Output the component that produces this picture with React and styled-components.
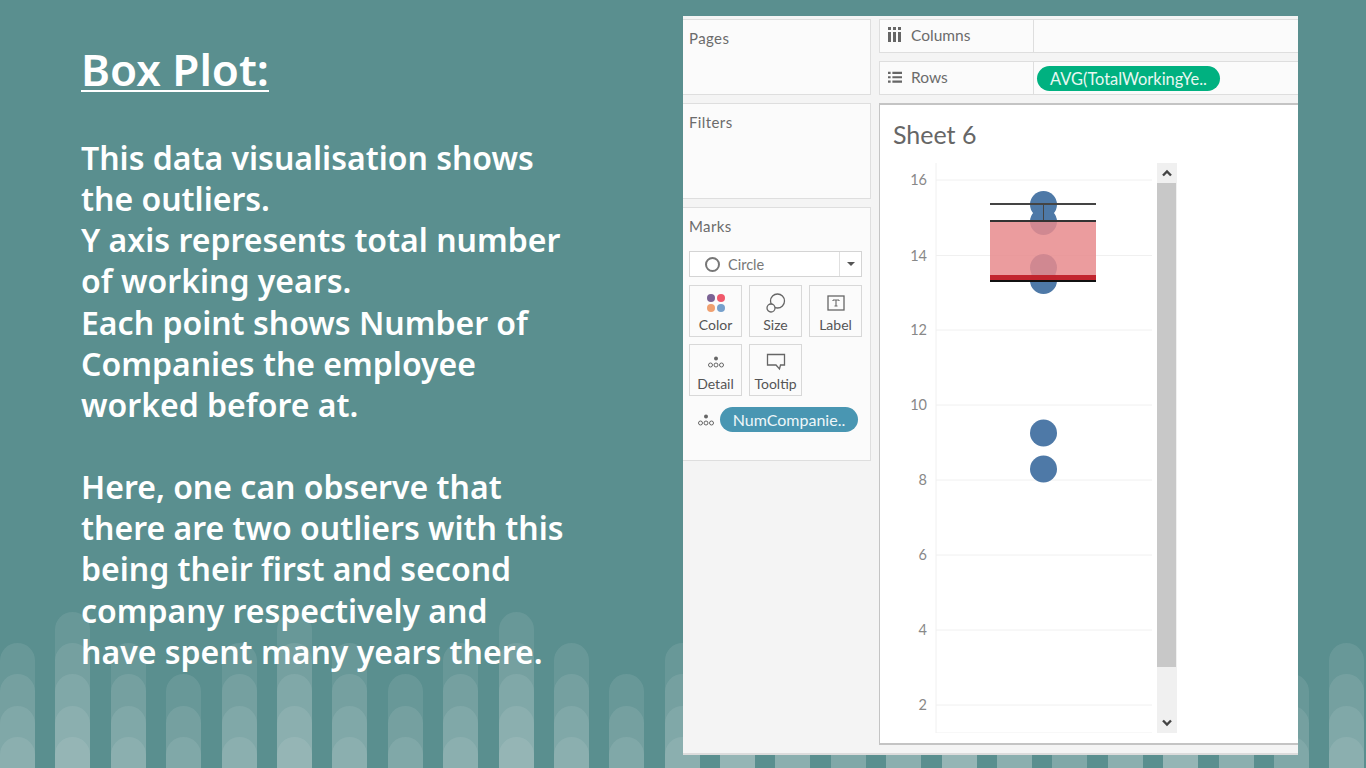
import React from 'react';
import styled, { createGlobalStyle } from 'styled-components';

const BAR_PATTERN = [4, 5, 4, 3];
const BARS = Array.from({ length: 25 }, (_, i) => BAR_PATTERN[i % 4]);
const TICKS = [
  { label: '16', y: 180 },
  { label: '14', y: 255.5 },
  { label: '12', y: 330 },
  { label: '10', y: 405 },
  { label: '8', y: 480 },
  { label: '6', y: 555 },
  { label: '4', y: 630 },
  { label: '2', y: 705 },
];
const POINTS = [204.5, 221.5, 267.5, 280.5, 433, 469];

const DetailIcon = () => (
  <svg width="18" height="14" viewBox="0 0 18 14" fill="none" stroke="#666" strokeWidth="1">
    <circle cx="9" cy="3.5" r="2" fill="#666" stroke="none" />
    <circle cx="3.5" cy="10" r="2" />
    <circle cx="9" cy="10" r="2" />
    <circle cx="14.5" cy="10" r="2" />
  </svg>
);

const ColorIcon = () => (
  <svg width="20" height="20" viewBox="0 0 20 20">
    <circle cx="5" cy="5" r="4" fill="#7b6294" />
    <circle cx="15" cy="5" r="4" fill="#f0596b" />
    <circle cx="5" cy="15" r="4" fill="#f0a070" />
    <circle cx="15" cy="15" r="4" fill="#76a0cc" />
  </svg>
);

const SizeIcon = () => (
  <svg width="20" height="20" viewBox="0 0 20 20" fill="none" stroke="#666" strokeWidth="1.3">
    <circle cx="11.5" cy="8" r="7" />
    <circle cx="5" cy="15" r="4" fill="#fbfbfb" />
  </svg>
);

const LabelIcon = () => (
  <svg width="18" height="16" viewBox="0 0 18 16" fill="none" stroke="#666">
    <rect x="1" y="1" width="16" height="14" strokeWidth="1.3" />
    <path d="M6 5h6M9 5v6M7.5 11h3M6 5v1M12 5v1" strokeWidth="1.1" />
  </svg>
);

const TooltipIcon = () => (
  <svg width="20" height="18" viewBox="0 0 20 18" fill="none" stroke="#666" strokeWidth="1.3">
    <path d="M1.5 1.5h17v10.500h-4l-1 4-3.500-4h-8.500z" />
  </svg>
);

const WaveStack = ({ count }) =>
  count > 0 ? (
    <WaveLayer>
      <WaveStack count={count - 1} />
    </WaveLayer>
  ) : null;

const MarkCard = ({ icon, label }) => (
  <Card>
    <CardIcon>{icon}</CardIcon>
    {label}
  </Card>
);

const Plot = () => (
  <PlotSvg width="277" height="570" viewBox="880 163 277 570">
    <line x1="936" y1="163" x2="936" y2="733" stroke="#f0f0f0" />
    {TICKS.map((tick) => (
      <g key={tick.label}>
        <line x1="936" y1={tick.y} x2="1152" y2={tick.y} stroke="#f0f0f0" />
        <TickLabel x="927" y={tick.y + 5}>
          {tick.label}
        </TickLabel>
      </g>
    ))}
    <line x1="936" y1="733" x2="1152" y2="733" stroke="#f0f0f0" />
    {POINTS.map((cy) => (
      <circle key={cy} cx="1043.500" cy={cy} r="13.500" fill="#4e79a7" />
    ))}
    <rect x="990" y="221" width="106" height="60" fill="#e88b8d" fillOpacity="0.85" />
    <rect x="990" y="275" width="106" height="5" fill="#c01f28" fillOpacity="0.95" />
    <line x1="990" y1="204" x2="1096" y2="204" stroke="#444" strokeWidth="2" />
    <line x1="1043.500" y1="204" x2="1043.500" y2="221" stroke="#444" />
    <line x1="990" y1="221" x2="1096" y2="221" stroke="#333" strokeWidth="2" />
    <line x1="990" y1="281" x2="1096" y2="281" stroke="#111" strokeWidth="2" />
  </PlotSvg>
);

const App = () => {
  return (
    <Slide>
      <GlobalStyle />
      <Waves>
        {BARS.map((count, i) => (
          <WaveBar key={i}>
            <WaveStack count={count} />
          </WaveBar>
        ))}
      </Waves>

      <TextColumn>
        <Title>Box Plot:</Title>
        <Paragraph>
          This data visualisation shows
          <br />
          the outliers.
          <br />
          Y axis represents total number
          <br />
          of working years.
          <br />
          Each point shows Number of
          <br />
          Companies the employee
          <br />
          worked before at.
        </Paragraph>
        <Paragraph>
          Here, one can observe that
          <br />
          there are two outliers with this
          <br />
          being their first and second
          <br />
          company respectively and
          <br />
          have spent many years there.
        </Paragraph>
      </TextColumn>

      <Workbook>
        <SideColumn>
          <Pane $height={76}>
            <PaneTitle>Pages</PaneTitle>
          </Pane>
          <Pane $height={96}>
            <PaneTitle>Filters</PaneTitle>
          </Pane>
          <Pane $height={254}>
            <PaneTitle>Marks</PaneTitle>
            <MarkSelect>
              <MarkType>
                <MarkCircle />
                Circle
              </MarkType>
              <MarkCaret />
            </MarkSelect>
            <CardGrid>
              <MarkCard icon={<ColorIcon />} label="Color" />
              <MarkCard icon={<SizeIcon />} label="Size" />
              <MarkCard icon={<LabelIcon />} label="Label" />
              <MarkCard icon={<DetailIcon />} label="Detail" />
              <MarkCard icon={<TooltipIcon />} label="Tooltip" />
            </CardGrid>
            <FieldRow>
              <DetailIcon />
              <MarkPill>NumCompanie..</MarkPill>
            </FieldRow>
          </Pane>
        </SideColumn>

        <MainColumn>
          <Shelf>
            <ShelfLabel>
              <svg width="14" height="16" viewBox="0 0 14 16" fill="#666">
                <path d="M0 0h3v3H0zM5 0h3v3H5zM10 0h3v3h-3zM0 5h3v10H0zM5 5h3v10H5zM10 5h3v10h-3z" />
              </svg>
              Columns
            </ShelfLabel>
            <ShelfBody />
          </Shelf>
          <Shelf>
            <ShelfLabel>
              <svg width="14" height="14" viewBox="0 0 16 14" fill="#666">
                <path d="M0 1h3v2.500H0zM5 1h11v2.500H5zM0 6h3v2.500H0zM5 6h11v2.500H5zM0 11h3v2.500H0zM5 11h11v2.500H5z" />
              </svg>
              Rows
            </ShelfLabel>
            <ShelfBody>
              <RowPill>AVG(TotalWorkingYe..</RowPill>
            </ShelfBody>
          </Shelf>
          <Sheet>
            <SheetTitle>Sheet 6</SheetTitle>
            <ChartRow>
              <Plot />
              <Scrollbar>
                <ScrollArrow>
                  <svg width="12" height="8" viewBox="0 0 12 8" fill="none" stroke="#444" strokeWidth="2.400">
                    <path d="M2 6.500l4-4 4 4" />
                  </svg>
                </ScrollArrow>
                <ScrollThumb />
                <ScrollArrow $bottom>
                  <svg width="12" height="8" viewBox="0 0 12 8" fill="none" stroke="#444" strokeWidth="2.400">
                    <path d="M2 1.500l4 4 4-4" />
                  </svg>
                </ScrollArrow>
              </Scrollbar>
            </ChartRow>
          </Sheet>
        </MainColumn>
      </Workbook>
    </Slide>
  );
};

export default App;

const GlobalStyle = createGlobalStyle`
  html, body {
    margin: 0;
    padding: 0;
  }
  body {
    width: 1366px;
    height: 768px;
    overflow: hidden;
    background: #5a8f8f;
  }
`;

const Slide = styled.div`
  position: relative;
  width: 1366px;
  height: 768px;
  display: flex;
  justify-content: space-between;
  padding: 16px 68px 13px 81px;
  box-sizing: border-box;
  overflow: hidden;
  background: #5a8f8f;
`;

const Waves = styled.div`
  position: absolute;
  left: 0;
  right: -20px;
  bottom: 0;
  display: flex;
  align-items: flex-end;
  gap: 20.4px;
`;

const WaveBar = styled.div`
  width: 35px;
  flex-shrink: 0;
`;

const WaveLayer = styled.div`
  padding-top: 31.2px;
  border-radius: 17.5px 17.5px 0 0;
  background: rgba(255, 255, 255, 0.085);
`;

const TextColumn = styled.div`
  position: relative;
  width: 540px;
  padding-top: 27px;
  font-family: 'Noto Sans', 'Open Sans', sans-serif;
  color: #fff;
`;

const Title = styled.h1`
  margin: 0 0 32px;
  height: 62px;
  font-size: 44px;
  line-height: 52px;
  font-weight: 600;
  text-decoration: underline;
  text-decoration-thickness: 2px;
  text-underline-offset: 4px;
`;

const Paragraph = styled.p`
  margin: 0 0 41px;
  font-size: 32px;
  line-height: 41.15px;
  font-weight: 600;
  white-space: nowrap;
`;

const Workbook = styled.div`
  position: relative;
  width: 615px;
  height: 739px;
  display: flex;
  gap: 8px;
  padding: 3px 0 0;
  box-sizing: border-box;
  background: #f4f4f4;
  border-bottom: 2px solid #dcdcdc;
  font-family: 'Lato', 'Liberation Sans', sans-serif;
  color: #666;
`;

const SideColumn = styled.div`
  width: 188px;
  flex-shrink: 0;
  display: flex;
  flex-direction: column;
  gap: 8px;
`;

const Pane = styled.div`
  height: ${({ $height }) => $height}px;
  box-sizing: border-box;
  padding: 9px 8px 0 6px;
  background: #fbfbfb;
  border: 1px solid #dedede;
  border-left: none;
`;

const PaneTitle = styled.div`
  font-size: 15px;
  line-height: 18px;
  letter-spacing: 0.4px;
  color: #6b6b6b;
`;

const MarkSelect = styled.div`
  margin-top: 16px;
  height: 26px;
  display: flex;
  box-sizing: border-box;
  background: #fff;
  border: 1px solid #d4d4d4;
`;

const MarkType = styled.div`
  flex: 1;
  display: flex;
  align-items: center;
  gap: 8px;
  padding-left: 15px;
  font-size: 14.5px;
  color: #777;
  border-right: 1px solid #e0e0e0;
`;

const MarkCircle = styled.span`
  width: 11px;
  height: 11px;
  border: 2px solid #777;
  border-radius: 50%;
`;

const MarkCaret = styled.span`
  width: 21px;
  position: relative;

  &::after {
    content: '';
    position: absolute;
    left: 7px;
    top: 10px;
    border-style: solid;
    border-width: 4px 4px 0;
    border-color: #555 transparent transparent;
  }
`;

const CardGrid = styled.div`
  margin-top: 8px;
  display: grid;
  grid-template-columns: 53px 53px 53px;
  grid-auto-rows: 52px;
  gap: 7px 7px;
`;

const Card = styled.div`
  display: flex;
  flex-direction: column;
  align-items: center;
  justify-content: flex-start;
  box-sizing: border-box;
  border: 1px solid #d8d8d8;
  font-size: 14px;
  line-height: 16px;
  color: #555;
`;

const CardIcon = styled.div`
  height: 31px;
  display: flex;
  align-items: center;
  justify-content: center;
  padding-top: 3px;
  box-sizing: border-box;
`;

const FieldRow = styled.div`
  margin-top: 11px;
  margin-left: 8px;
  display: flex;
  align-items: center;
  gap: 5px;
`;

const MarkPill = styled.div`
  width: 138px;
  height: 25px;
  border-radius: 13px;
  background: #4996b2;
  color: #eef6f9;
  font-size: 16px;
  line-height: 25px;
  text-align: center;
`;

const MainColumn = styled.div`
  flex: 1;
  display: flex;
  flex-direction: column;
  gap: 8px;
  min-width: 0;
`;

const Shelf = styled.div`
  height: 34px;
  display: flex;
  flex-shrink: 0;
  box-sizing: border-box;
  background: #fbfbfb;
  border: 1px solid #dedede;
  border-right: none;
`;

const ShelfLabel = styled.div`
  width: 154px;
  display: flex;
  align-items: center;
  gap: 9px;
  padding: 0 0 2px 8px;
  box-sizing: border-box;
  font-size: 15.5px;
  color: #6b6b6b;
  border-right: 1px solid #dedede;
`;

const ShelfBody = styled.div`
  flex: 1;
  display: flex;
  align-items: center;
  padding-left: 3px;
`;

const RowPill = styled.div`
  width: 183px;
  height: 25px;
  border-radius: 13px;
  background: #00b180;
  color: #e8f8f2;
  font-size: 16.4px;
  line-height: 25px;
  text-align: center;
`;

const Sheet = styled.div`
  flex: 1;
  box-sizing: border-box;
  margin-bottom: 8px;
  background: #fff;
  border: 1px solid #c4c4c4;
  border-right: none;
  border-top-width: 2px;
  border-bottom-width: 2px;
`;

const SheetTitle = styled.div`
  margin: 16px 0 0 13px;
  height: 26px;
  font-size: 25px;
  line-height: 26px;
  font-weight: 400;
  color: #666;
`;

const ChartRow = styled.div`
  margin-top: 16px;
  display: flex;
  align-items: flex-start;
`;

const PlotSvg = styled.svg`
  display: block;
  flex-shrink: 0;
`;

const TickLabel = styled.text`
  font-family: 'Lato', 'Liberation Sans', sans-serif;
  font-size: 14.5px;
  fill: #888;
  text-anchor: end;
`;

const Scrollbar = styled.div`
  width: 20px;
  height: 570px;
  display: flex;
  flex-direction: column;
  background: #f0f0f0;
`;

const ScrollArrow = styled.div`
  height: ${({ $bottom }) => ($bottom ? 66 : 20)}px;
  display: flex;
  align-items: ${({ $bottom }) => ($bottom ? 'flex-end' : 'center')};
  justify-content: center;
  padding-bottom: ${({ $bottom }) => ($bottom ? 6 : 0)}px;
  box-sizing: border-box;
`;

const ScrollThumb = styled.div`
  width: 19px;
  height: 484px;
  background: #c8c8c8;
`;
